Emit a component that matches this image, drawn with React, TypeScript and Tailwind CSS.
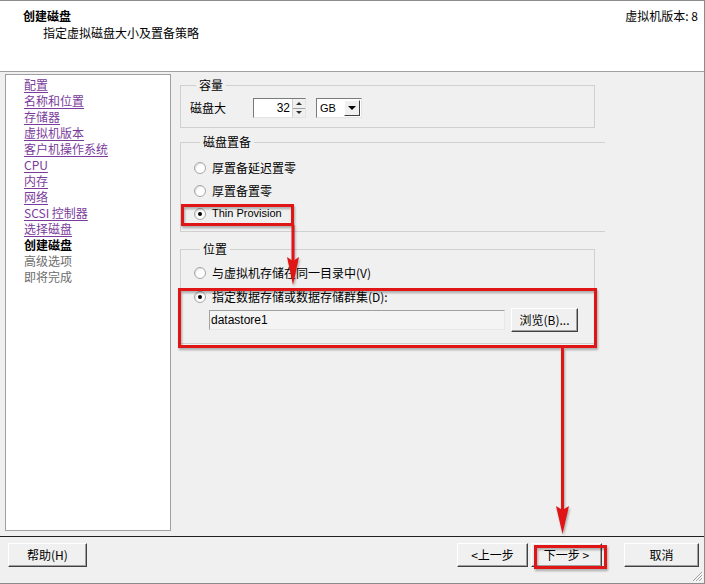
import React from 'react';

const cjk = { fontFamily: '"SimSun", "Noto Sans CJK SC", "Liberation Sans", sans-serif' };

const navItems = [
  { label: '配置', state: 'link' },
  { label: '名称和位置', state: 'link' },
  { label: '存储器', state: 'link' },
  { label: '虚拟机版本', state: 'link' },
  { label: '客户机操作系统', state: 'link' },
  { label: 'CPU', state: 'link' },
  { label: '内存', state: 'link' },
  { label: '网络', state: 'link' },
  { label: 'SCSI 控制器', state: 'link' },
  { label: '选择磁盘', state: 'link' },
  { label: '创建磁盘', state: 'current' },
  { label: '高级选项', state: 'todo' },
  { label: '即将完成', state: 'todo' },
];

const Radio = ({ checked }: { checked?: boolean }) => (
  <span className="w-[12px] h-[12px] rounded-full border border-[#a5a5a5] bg-white flex items-center justify-center shadow-[inset_1px_1px_1px_rgba(0,0,0,0.12)] shrink-0">
    {checked && <span className="w-[4px] h-[4px] rounded-full bg-black" />}
  </span>
);

const WinButton = ({ children, className = '' }: { children: React.ReactNode; className?: string }) => (
  <button
    className={`h-[24px] bg-[#f0f0f0] border-t border-l border-t-white border-l-white border-r border-b border-r-[#404040] border-b-[#404040] shadow-[inset_-1px_-1px_0_#a0a0a0,0_0_0_0_#fff] text-[12px] text-black flex items-center justify-center ${className}`}
    style={cjk}
  >
    {children}
  </button>
);

const Group = ({ label, className = '', children }: { label: string; className?: string; children: React.ReactNode }) => (
  <fieldset className={`border border-[#d0d0d0] ${className}`}>
    <legend className="ml-[6px] px-[3px] text-[12px] leading-[16px] text-black" style={cjk}>{label}</legend>
    {children}
  </fieldset>
);

const App: React.FC = () => {
  return (
    <div className="relative w-[705px] h-[584px] bg-[#f0f0f0] border-t border-r border-b border-[#8c8c8c] flex flex-col overflow-hidden text-black" style={cjk}>
      {/* Header */}
      <header className="h-[71px] shrink-0 bg-white border-b border-[#a0a0a0] flex justify-between pl-[23px] pr-[6px] pt-[7px]">
        <div>
          <div className="text-[12px] leading-[16px] font-bold">创建磁盘</div>
          <div className="text-[12px] leading-[17px] ml-[20px]">指定虚拟磁盘大小及置备策略</div>
        </div>
        <div className="text-[12px] leading-[16px]">虚拟机版本: 8</div>
      </header>

      {/* Body */}
      <div className="h-[465px] shrink-0 flex border-b border-[#202020] pl-[5px] pt-[2px] pb-[5px]">
        <nav className="w-[166px] bg-white border border-[#a0a0a0] pt-[2px] pl-[18px]">
          {navItems.map(item => (
            <div
              key={item.label}
              className={`text-[12px] leading-[16px] ${
                item.state === 'link'
                  ? 'text-[#7a3b9c] underline underline-offset-[2px]'
                  : item.state === 'current'
                  ? 'font-bold text-black'
                  : 'text-[#6d6d6d]'
              }`}
            >
              {item.label}
            </div>
          ))}
        </nav>

        <div className="flex-1 pl-[9px] pt-[3px] flex flex-col">
          {/* 容量 */}
          <Group label="容量" className="w-[415px] pt-[5px] pb-[9px] pl-[9px]">
            <div className="flex items-center h-[20px]">
              <span className="text-[12px] w-[63px]">磁盘大</span>
              <div className="w-[53px] h-[20px] bg-white border border-t-[#7a7a7a] border-l-[#7a7a7a] border-r-[#e3e3e3] border-b-[#e3e3e3] flex items-center">
                <span className="flex-1 text-right pr-[2px] text-[12px] leading-[16px]" style={{ fontFamily: '"Liberation Sans", sans-serif' }}>32</span>
                <div className="w-[13px] h-[18px] flex flex-col border-l border-[#d0d0d0]">
                  <div className="flex-1 bg-[#f0f0f0] border-b border-[#a0a0a0] flex items-center justify-center">
                    <span className="w-0 h-0 border-l-[3px] border-r-[3px] border-b-[3px] border-l-transparent border-r-transparent border-b-[#303030]" />
                  </div>
                  <div className="flex-1 bg-[#f0f0f0] flex items-center justify-center">
                    <span className="w-0 h-0 border-l-[3px] border-r-[3px] border-t-[3px] border-l-transparent border-r-transparent border-t-[#303030]" />
                  </div>
                </div>
              </div>
              <div className="ml-[10px] w-[46px] h-[20px] bg-white border border-t-[#7a7a7a] border-l-[#7a7a7a] border-r-[#e3e3e3] border-b-[#e3e3e3] flex items-center">
                <span className="flex-1 pl-[3px] text-[11px]" style={{ fontFamily: '"Liberation Sans", sans-serif' }}>GB</span>
                <div className="w-[16px] h-[16px] mr-[1px] bg-[#f0f0f0] border-t border-l border-t-white border-l-white border-r border-b border-r-[#404040] border-b-[#404040] flex items-center justify-center">
                  <span className="w-0 h-0 border-l-[4px] border-r-[4px] border-t-[4px] border-l-transparent border-r-transparent border-t-black" />
                </div>
              </div>
            </div>
          </Group>

          {/* 磁盘置备 */}
          <Group label="磁盘置备" className="mt-[6px] w-[425px] border-r-0 pt-[6px] pb-[6px] pl-[13px]">
            <div className="flex items-center gap-[6px] h-[23px]">
              <Radio />
              <span className="text-[12px]">厚置备延迟置零</span>
            </div>
            <div className="flex items-center gap-[6px] h-[23px]">
              <Radio />
              <span className="text-[12px]">厚置备置零</span>
            </div>
            <div className="flex items-center gap-[6px] h-[23px]">
              <Radio checked />
              <span className="text-[11px]" style={{ fontFamily: '"Liberation Sans", sans-serif' }}>Thin Provision</span>
            </div>
          </Group>

          {/* 位置 */}
          <Group label="位置" className="mt-[9px] w-[415px] pt-[5px] pb-[12px] pl-[13px]">
            <div className="flex items-center gap-[6px] h-[22px]">
              <Radio />
              <span className="text-[12px]">与虚拟机存储在同一目录中(V)</span>
            </div>
            <div className="flex items-center gap-[6px] h-[22px] mt-[2px]">
              <Radio checked />
              <span className="text-[12px]">指定数据存储或数据存储群集(D):</span>
            </div>
            <div className="flex items-center ml-[15px] gap-[6px] h-[23px]">
              <div className="w-[296px] h-[20px] bg-[#f4f4f4] border border-t-[#a0a0a0] border-l-[#a0a0a0] border-r-[#e8e8e8] border-b-[#e8e8e8] flex items-center pl-[1px] text-[12px]" style={{ fontFamily: '"Liberation Sans", sans-serif' }}>
                datastore1
              </div>
              <WinButton className="w-[67px] h-[23px]">浏览(B)...</WinButton>
            </div>
          </Group>
        </div>
      </div>

      {/* Footer */}
      <footer className="flex-1 flex items-start pt-[6px] pl-[8px] pr-[5px]">
        <WinButton className="w-[79px]">帮助(H)</WinButton>
        <div className="flex-1" />
        <WinButton className="w-[71px]">&lt;上一步</WinButton>
        <WinButton className="w-[71px] ml-[3px]">下一步 &gt;</WinButton>
        <WinButton className="w-[75px] ml-[22px]">取消</WinButton>
      </footer>

      {/* size grip */}
      <svg className="absolute right-[1px] bottom-[1px]" width="12" height="12" viewBox="0 0 12 12">
        <path d="M11 2 L2 11 M11 5 L5 11 M11 8 L8 11" stroke="#a0a0a0" strokeWidth="1" />
        <path d="M12 3 L3 12 M12 6 L6 12 M12 9 L9 12" stroke="#ffffff" strokeWidth="1" />
      </svg>

      {/* red annotations */}
      <svg
        className="absolute inset-0 pointer-events-none drop-shadow-[1px_2px_1px_rgba(0,0,0,0.3)]"
        width="705"
        height="584"
        viewBox="0 0 705 584"
      >
        <g stroke="#e01515" strokeWidth="3" fill="none">
          <rect x="182.5" y="204.5" width="110" height="19" />
          <line x1="293" y1="224" x2="293" y2="262" />
          <rect x="179.5" y="288.5" width="416" height="57" />
          <line x1="562.5" y1="347" x2="562.5" y2="510" />
          <rect x="535.5" y="545.5" width="70" height="21" />
        </g>
        <g fill="#e01515">
          <polygon points="287,256 293,260 299,256 293,284" />
          <polygon points="556,505 562.5,509 569,505 562.5,533" />
        </g>
      </svg>
    </div>
  );
};

export default App;
